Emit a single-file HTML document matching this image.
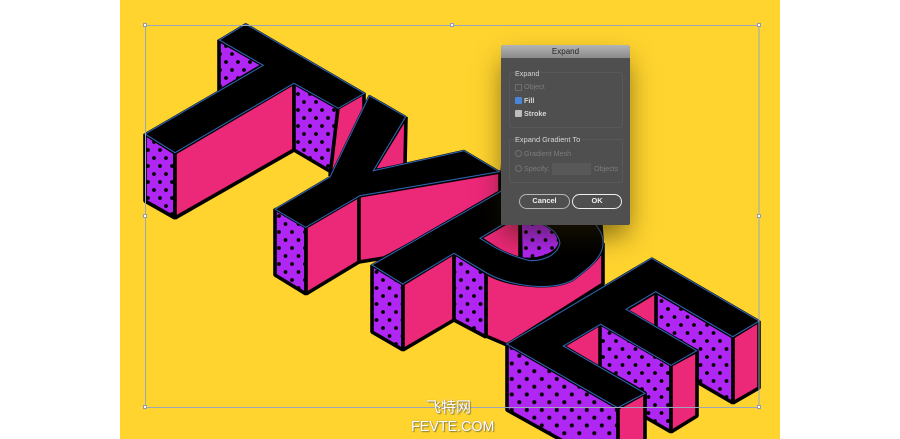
<!DOCTYPE html>
<html><head><meta charset="utf-8">
<style>
html,body{margin:0;padding:0;background:#fff;width:900px;height:439px;overflow:hidden}
#w{position:relative;width:900px;height:439px;overflow:hidden;font-family:"Liberation Sans",sans-serif}
svg{position:absolute;left:0;top:0}
.d{position:absolute;left:501px;top:45px;width:129px;height:180px;background:#4f4f4f;border-radius:3px 3px 2px 2px;box-shadow:0 13px 26px -3px rgba(40,30,0,.6);overflow:hidden}
.t{position:absolute;left:0;top:0;width:100%;height:13px;background:linear-gradient(#b4b4b4,#8a8a8a);color:#222;font-size:8px;line-height:13px;text-align:center}
.g{position:absolute;border:1px solid #585858;border-radius:2px}
.l{position:absolute;font-size:7.2px;line-height:10px;color:#d6d6d6;white-space:nowrap}
.m{color:#7c7c7c}
.b{position:absolute;font-weight:bold;font-size:7.4px;line-height:12px;text-align:center;color:#eee;border-radius:8px;box-sizing:border-box;height:15px}
.c{position:absolute;width:7px;height:7px;border-radius:1px;box-sizing:border-box}
.r{position:absolute;width:7px;height:7px;border-radius:50%;border:1px solid #707070;box-sizing:border-box}
.wm{position:absolute;color:#fff;text-shadow:0 0 1px #8a8060,1px 1px 1px rgba(90,80,40,.7);white-space:nowrap}
</style></head><body><div id="w">
<svg width="900" height="439" viewBox="0 0 900 439">
<defs>
<clipPath id="cp"><rect x="120" y="0" width="660" height="439"/></clipPath>
<pattern id="a" width="12" height="16" patternUnits="userSpaceOnUse" patternTransform="translate(1 2)">
<rect width="12" height="16" fill="#b026f2"/><circle cx="3" cy="4" r="1.9" fill="#000"/><circle cx="9" cy="12" r="1.9" fill="#000"/></pattern>
<pattern id="b" width="13" height="16" patternUnits="userSpaceOnUse" patternTransform="translate(3 4)">
<rect width="13" height="16" fill="#b026f2"/><circle cx="3" cy="4" r="1.9" fill="#000"/><circle cx="9.5" cy="12" r="1.9" fill="#000"/></pattern>
<pattern id="c" width="15" height="15.5" patternUnits="userSpaceOnUse" patternTransform="translate(519.3 386.7)">
<rect width="15" height="15.5" fill="#b026f2"/><circle cx="0" cy="0" r="2" fill="#000"/><circle cx="15" cy="0" r="2" fill="#000"/><circle cx="0" cy="15.5" r="2" fill="#000"/><circle cx="15" cy="15.5" r="2" fill="#000"/><circle cx="7.5" cy="7.75" r="2" fill="#000"/></pattern>
<pattern id="e" width="13" height="16" patternUnits="userSpaceOnUse" patternTransform="translate(2 1)">
<rect width="13" height="16" fill="#b026f2"/><circle cx="3" cy="4" r="1.9" fill="#000"/><circle cx="9.5" cy="12" r="1.9" fill="#000"/></pattern>
</defs>
<g clip-path="url(#cp)">
<rect x="120" y="0" width="660" height="439" fill="#ffd42f"/>
<g stroke="#000" stroke-width="3.6" stroke-linejoin="bevel">
<!-- T -->
<polygon points="219,40 263,65 219,91" fill="url(#a)"/>
<polygon points="145,134 175,153 175,218 145,201" fill="url(#a)"/>
<polygon points="175,153 294,83 294,150 175,218" fill="#ec2878"/>
<polygon points="294,83 338,108 338,176 294,150" fill="url(#a)"/>
<polygon points="338,108 364,93 364,140 330,176" fill="#ec2878"/>
<!-- Y -->
<polygon points="373,171 406,117 405,165" fill="#ec2878"/>
<polygon points="275,209 306,227 306,294 275,275" fill="url(#b)"/>
<polygon points="306,227 359,196 359,262 306,294" fill="#ec2878"/>
<polygon points="359,196 500,172 500,196 384,258 359,262" fill="#ec2878"/>
<!-- P -->
<path d="M486,273 C510,286 550,292 580,272 C592,264 603,255 603,243 L603,284 L507,345 L486,336 Z" fill="#ec2878"/>
<polygon points="372,265 403,284 403,350 372,332" fill="url(#b)"/>
<polygon points="403,284 454,253 454,320 403,350" fill="#ec2878"/>
<polygon points="454,253 486,273 486,337 454,320" fill="url(#b)"/>
<path d="M480,238 L520,215 L520,259 C505,255 495,248 480,238 Z" fill="#ec2878"/>
<path d="M520,215 L545,222 C556,230 560,238 560,243 C558,254 540,261 521,259 Z" fill="url(#b)"/>
<!-- E -->
<polygon points="656,292 733,337 733,403 697,382 697,351 626,310 656,292" fill="url(#e)"/>
<polygon points="733,337 759,321 759,388 733,403" fill="#ec2878"/>
<polygon points="601,324 671,365 671,432 645,417 645,393 563,346" fill="url(#e)"/>
<polygon points="671,365 697,351 697,416 671,432" fill="#ec2878"/>
<polygon points="626,310 656,292 656,328" fill="#ec2878"/>
<polygon points="563,346 600,324 600,368" fill="#ec2878"/>
<polygon points="507,344 618,408 618,445 570,445 507,410" fill="url(#c)"/>
<polygon points="618,408 645,393 645,445 618,445" fill="#ec2878"/>
</g>
<g fill="#000" stroke="#000" stroke-width="2" stroke-linejoin="bevel">
<polygon points="245.7,24 364.3,93.3 338.3,108.3 294,83.3 175,152.7 145,134 263.3,65.3 219.3,40"/>
<polygon points="369.3,95.7 405.7,116.7 373.3,170.7 464,150.7 499.3,171.7 360,195.7 305.7,227.3 275,209.3 330,177"/>
<path d="M372,265 L500,191 L503,150 L600,200 L603,243 C603,256 592,266 573,280 C550,292 510,286 486.7,273 L454,253.3 L402.7,284 Z M480,238.3 C495,248 507,255 530,260.7 C545,261 558,254 560,243 C558,233 552,229 543,224 L520,214 Z" fill-rule="evenodd"/>
<polygon points="651.7,258.3 759.3,321 732.7,336.7 655.7,291.7 626,309.3 696.7,350.7 671,365.3 600.7,324.3 563.3,346 645,393.3 617.7,407.7 506.7,344"/>
</g>
<g fill="none" stroke="#2f62ad" stroke-width="1.1" stroke-linejoin="miter">
<polygon points="245.7,24 364.3,93.3 338.3,108.3 294,83.3 175,152.7 145,134 263.3,65.3 219.3,40"/>
<polygon points="369.3,95.7 405.7,116.7 373.3,170.7 464,150.7 499.3,171.7 360,195.7 305.7,227.3 275,209.3 330,177"/>
<path d="M510,186 L372,265 L402.7,284 L454,253.3 L486.7,273 C510,286 550,292 573,280 C592,266 603,256 603,243 C603,238 602,233 598,228 L594,222"/>
<path d="M480,238.3 C495,248 507,255 530,260.7 C545,261 558,254 560,243 C558,233 552,229 543,224 L520,214 Z"/>
<polygon points="651.7,258.3 759.3,321 732.7,336.7 655.7,291.7 626,309.3 696.7,350.7 671,365.3 600.7,324.3 563.3,346 645,393.3 617.7,407.7 506.7,344"/>
</g>
<!-- selection box -->
<rect x="145.5" y="25.5" width="613.5" height="382" fill="none" stroke="#9ca6b8" stroke-width="1"/>
<g fill="#fff" stroke="#8f9db8" stroke-width="1">
<rect x="143.5" y="23.5" width="3" height="3"/><rect x="450.5" y="23.5" width="3" height="3"/><rect x="757.5" y="23.5" width="3" height="3"/>
<rect x="143.5" y="214.5" width="3" height="3"/><rect x="757.5" y="214.5" width="3" height="3"/>
<rect x="143.5" y="405.5" width="3" height="3"/><rect x="757.5" y="405.5" width="3" height="3"/>
</g>
</g>
</svg>
<div class="d">
<div class="t">Expand</div>
<div class="g" style="left:8px;top:27px;width:112px;height:54px"></div>
<div class="g" style="left:8px;top:94px;width:112px;height:42px"></div>
<div class="l" style="left:14px;top:24px;background:#4f4f4f;padding-right:2px">Expand</div>
<div class="c" style="left:14px;top:39px;border:1px solid #6e6e6e"></div>
<div class="l m" style="left:23px;top:37px">Object</div>
<div class="c" style="left:14px;top:52px;background:#4a86d8"></div>
<div class="l" style="left:23px;top:51px;font-weight:bold">Fill</div>
<div class="c" style="left:14px;top:65px;background:#bdbdbd"></div>
<div class="l" style="left:23px;top:64px;font-weight:bold">Stroke</div>
<div class="l" style="left:14px;top:90px;background:#4f4f4f;padding-right:2px;font-size:7.4px">Expand Gradient To</div>
<div class="r" style="left:14px;top:105px"></div>
<div class="l m" style="left:23px;top:104px">Gradient Mesh</div>
<div class="r" style="left:14px;top:120px"></div>
<div class="l m" style="left:23px;top:119px">Specify:</div>
<div style="position:absolute;left:51px;top:118px;width:39px;height:12px;background:#585858"></div>
<div class="l m" style="left:93px;top:119px">Objects</div>
<div class="b" style="left:18px;top:149px;width:51px;border:1px solid #b5b5b5">Cancel</div>
<div class="b" style="left:71px;top:149px;width:50px;border:1.5px solid #eee">OK</div>
</div>
<div class="wm" style="left:426px;top:399px;font-size:15px;line-height:17px;font-family:'Liberation Sans','Noto Sans CJK SC',sans-serif">飞特网</div>
<div class="wm" style="left:411px;top:419px;font-size:14.3px;line-height:17px">FEVTE.COM</div>
</div></body></html>
